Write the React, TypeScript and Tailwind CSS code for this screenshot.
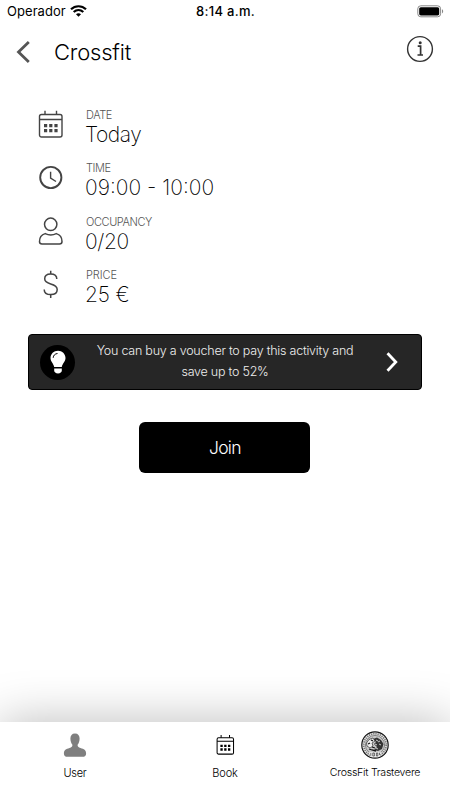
import type { ReactNode } from 'react';

const CalendarIcon = ({ className }: { className?: string }) => (
  <svg viewBox="0 0 26 29" fill="none" stroke="currentColor" className={className}>
    <rect x="1.5" y="4.5" width="22.5" height="22.5" rx="2" strokeWidth="1.4" />
    <path d="M1.5 9.5H24M7 0.8V4.5M18.5 0.8V4.5" strokeWidth="1.4" />
    <path d="M6 15.7H9.2M11.2 15.7H14.4M16.4 15.7H19.6M6 20.7H9.2M11.2 20.7H14.4M16.4 20.7H19.6" strokeWidth="3.2" />
  </svg>
);

const ClockIcon = () => (
  <svg viewBox="0 0 26 26" fill="none" stroke="currentColor" className="w-[26px] h-[26px]">
    <circle cx="12.8" cy="12.5" r="10.6" strokeWidth="1.9" />
    <path d="M12.6 6.8V13L18 16.5" strokeWidth="1.4" />
  </svg>
);

const PersonIcon = () => (
  <svg viewBox="0 0 26 29" fill="none" stroke="currentColor" strokeWidth="1.5" className="w-[26px] h-[29px]">
    <circle cx="12.7" cy="7.3" r="6.2" />
    <path d="M7.2 16.6C3.5 17.6 1.5 20.8 1.5 24.5C1.5 26.3 2.3 27 4 27H21.5C23.2 27 24 26.3 24 24.5C24 20.8 22 17.6 18.3 16.6C14.8 18.3 10.7 18.3 7.2 16.6Z" />
  </svg>
);

const DollarIcon = () => (
  <svg viewBox="0 0 26 29" fill="none" stroke="currentColor" strokeWidth="1.5" className="w-[26px] h-[29px]">
    <path d="M12.7 0.8V4M12.7 24.5V28" />
    <path d="M18.8 9C18.8 5.8 16.5 4 12.7 4C9 4 6.7 5.8 6.7 8.8C6.7 12 9.2 13 12.7 14C16.5 15 19.2 16.2 19.2 19.5C19.2 22.8 16.5 24.6 12.8 24.6C8.8 24.6 6.2 22.8 6.2 19.4" />
  </svg>
);

const ClubLogo = () => (
  <svg viewBox="0 0 28 28" fill="none" stroke="#111" className="w-7 h-7">
    <circle cx="14" cy="14" r="13.2" fill="#eee" strokeWidth="1.2" />
    <circle cx="14" cy="14" r="11.2" stroke="#777" strokeWidth="1.8" strokeDasharray="1.3 0.9" />
    <circle cx="14" cy="14" r="9.6" fill="#c8c8c8" stroke="#444" strokeWidth="0.6" />
    <path d="M12 8L16 6.5L20 9L22.5 13L21 18L17 20L13 19L16 16L13 13L15 11Z" fill="#333" stroke="none" />
    <path d="M5.5 12L8 8.5L12 7L14 10L11 12L12 15L9 17L6 15Z" fill="#eee" strokeWidth="0.6" />
    <path d="M7 13L9 12M10 9L12 10M8 18L11 19L15 20M11 16L14 17" strokeWidth="1.3" />
    <path d="M15 9L17 10M18 13L20 14M15 17L17 18M17 11L19 10M14 13L16 14" stroke="#ddd" strokeWidth="0.9" />
    <path d="M7.5 21.3H20.5L18 26H10Z" fill="#eee" stroke="none" />
    <path d="M9.8 22V24.8M11.8 22H13.4V25H11.8ZM15.4 22H16.8V25H15.4ZM18.5 21.8V24" stroke="#333" strokeWidth="0.7" />
  </svg>
);

type DetailProps = { icon: ReactNode; label: string; value: string; valueClass: string; labelClass: string };

const Detail = ({ icon, label, value, valueClass, labelClass }: DetailProps) => (
  <li className="flex h-[53.3px]">
    <div className="flex w-[26px] h-[30px] items-center justify-center text-[#444] mr-[22px] mt-[1.5px]">{icon}</div>
    <div>
      <p className={`text-[11px] leading-[14px] text-[#555] ${labelClass}`}>{label}</p>
      <p className={`text-[21px] leading-[26px] font-extralight -ml-px ${valueClass}`}>{value}</p>
    </div>
  </li>
);

const App = () => {
  return (
    <div className="flex flex-col h-[800px] w-[450px] overflow-hidden bg-white text-black font-light font-['Inter','Liberation_Sans',sans-serif]">
      <div className="grid grid-cols-3 h-[22px] items-center pl-[7px] pr-[6px] text-[13px] font-normal">
        <div className="flex items-center gap-[4px] pt-px">
          <span className="tracking-[0.05px]">Operador</span>
          <svg viewBox="0 0 17 12" fill="none" stroke="#000" strokeWidth="2.2" className="w-[17px] h-3 -mt-px">
            <path d="M1 4.3C5.2 0.2 11.8 0.2 16 4.3M3.7 7C6.5 4.4 10.5 4.4 13.3 7" />
            <path d="M6 9.2C7.4 7.8 9.6 7.8 11 9.2L8.5 11.7Z" fill="#000" stroke="none" />
          </svg>
        </div>
        <span className="text-center font-medium pt-[2px] tracking-[0.3px]">8:14 a.m.</span>
        <svg viewBox="0 0 27 13" className="w-[27px] h-[13px] justify-self-end">
          <rect x="0.8" y="0.8" width="22.8" height="11" rx="3" fill="none" stroke="#888" />
          <rect x="2.2" y="2.2" width="20" height="8.2" rx="1.6" />
          <path d="M25 4.2C26.6 4.8 26.6 7.8 25 8.4Z" fill="#888" />
        </svg>
      </div>

      <header className="flex h-[58px] items-center pl-[16px] pr-[16px]">
        <svg viewBox="0 0 14 22" fill="none" stroke="#555" strokeWidth="2.8" className="w-[14px] h-[22px] mt-px">
          <path d="M12.8 1L2.5 11L12.8 21" />
        </svg>
        <h1 className="ml-[24px] mt-[2px] text-[22px] leading-[28px] tracking-[-0.2px]">Crossfit</h1>
        <svg viewBox="0 0 28 28" className="ml-auto w-7 h-7 -mt-[5px]" fill="none" stroke="#333" strokeWidth="1.4">
          <circle cx="14" cy="14" r="12.4" />
          <path d="M11.7 11.2H14.6V19.5M11.5 20H17" strokeWidth="1.7" />
          <circle cx="14.2" cy="7.7" r="1.5" fill="#333" stroke="none" />
        </svg>
      </header>

      <ul className="pl-[38px] pt-[28px] h-[254px]">
        <Detail icon={<CalendarIcon className="w-[26px] h-[29px]" />} label="DATE" value="Today" labelClass="tracking-[-0.4px]" valueClass="tracking-[-0.5px]" />
        <Detail icon={<ClockIcon />} label="TIME" value="09:00 - 10:00" labelClass="tracking-[-0.4px]" valueClass="tracking-normal" />
        <Detail icon={<PersonIcon />} label="OCCUPANCY" value="0/20" labelClass="tracking-[-0.4px]" valueClass="tracking-[-0.4px]" />
        <Detail icon={<DollarIcon />} label="PRICE" value="25 €" labelClass="tracking-[-0.1px]" valueClass="tracking-[-0.2px]" />
      </ul>

      <button className="flex items-center w-[394px] h-[56px] ml-[28px] rounded-[4px] border border-black bg-[#262626] text-[#eee] shrink-0">
        <span className="flex items-center justify-center w-[35px] h-[35px] ml-[11px] rounded-full bg-black">
          <svg viewBox="0 0 16 24" className="w-4 h-6">
            <path d="M8 0.7C3.8 0.7 0.5 3.8 0.5 8C0.5 11.8 3.6 13.5 4.2 17H11.8C12.4 13.5 15.5 11.8 15.5 8C15.5 3.8 12.2 0.7 8 0.7Z" fill="#fff" />
            <path d="M4.2 18.5H11.8V20.8C11.8 22 10.3 23.5 8 23.5S4.2 22 4.2 20.8Z" fill="#fff" />
            <path d="M3.2 7.8C3.3 5.5 5 3.7 7.5 3.5" fill="none" stroke="#000" />
          </svg>
        </span>
        <span className="w-[300px] text-center text-[12.5px] leading-[21.5px] tracking-[-0.23px] -mt-[2px]">
          You can buy a voucher to pay this activity and
          <br />
          save up to 52%
        </span>
        <svg viewBox="0 0 12 20" fill="none" stroke="#fff" strokeWidth="2.8" className="w-3 h-5 ml-[11px]">
          <path d="M1.5 1.2L9.8 10L1.5 18.8" />
        </svg>
      </button>

      <button className="w-[171px] h-[51px] mt-[32px] ml-[139.4px] rounded-[6px] bg-black text-white text-[17.5px] tracking-[-0.7px] shrink-0 pt-px">
        Join
      </button>

      <nav className="mt-auto grid grid-cols-3 h-[78px] bg-white text-[11px] shadow-[0_0_50px_rgba(0,0,0,0.27)]">
        <div className="flex flex-col items-center pt-[10px]">
          <svg viewBox="0 0 24 26" fill="#7f7f7f" className="w-6 h-[26px]">
            <path d="M12 1.5C8.9 1.5 7.4 3.5 7.4 6.5C7.4 9.5 8.4 11.6 9.4 12.8C9.6 14.6 8.5 15.4 6.5 16C3 17 0.9 18 0.9 21.5C0.9 24 2.2 24.8 4.5 24.8H19.5C21.8 24.8 23.1 24 23.1 21.5C23.1 18 21 17 17.5 16C15.5 15.4 14.4 14.6 14.6 12.8C15.6 11.6 16.6 9.5 16.6 6.5C16.6 3.5 15.1 1.5 12 1.5Z" />
          </svg>
          <span className="mt-[7px] leading-4 tracking-[-0.3px]">User</span>
        </div>
        <div className="flex flex-col items-center pt-[12px]">
          <CalendarIcon className="w-[19px] h-[22px]" />
          <span className="mt-[9px] leading-4 tracking-[-0.1px]">Book</span>
        </div>
        <div className="flex flex-col items-center pt-[9px]">
          <ClubLogo />
          <span className="mt-[6px] text-[10.6px] leading-4 tracking-[-0.26px]">CrossFit Trastevere</span>
        </div>
      </nav>
    </div>
  );
};

export default App;
